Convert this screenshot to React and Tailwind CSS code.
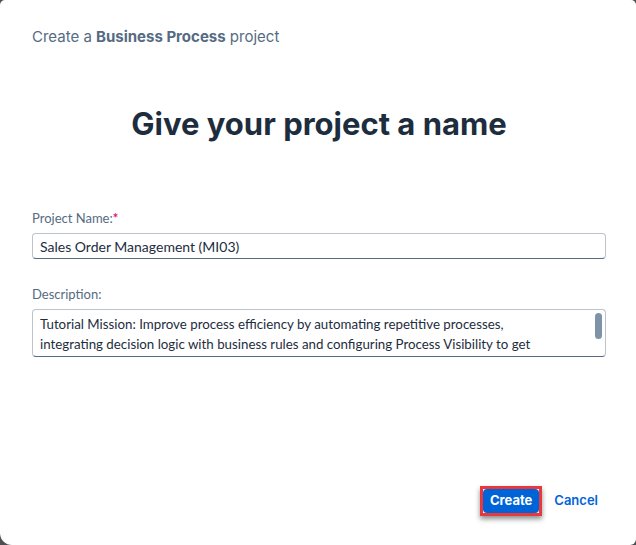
import React from "react";

export default function App() {
  return (
    <div className="w-[636px] h-[545px] bg-[#4d4f52] overflow-hidden" style={{ fontFamily: 'Lato, "Liberation Sans", sans-serif' }}>
      <div className="w-[636px] h-[545px] bg-white rounded-tl-[5px] rounded-tr-[5px] rounded-bl-[12px] rounded-br-[6px] flex flex-col pl-8 pr-[30px]">
        <div className="pt-[27px] text-[15px] text-[#556b82] leading-[20px]" style={{ fontFamily: 'Inter, sans-serif' }}>
          Create a <span className="font-bold">Business Process</span> project
        </div>
        <h1 className="mt-[58px] text-center text-[31px] font-bold text-[#1d2d3e] leading-[38px]" style={{ fontFamily: 'Inter, sans-serif' }}>
          Give your project a name
        </h1>
        <div className="mt-[66px] text-[13px] text-[#556b82] leading-[18px]">
          Project Name:<span className="text-[#df1278] font-bold">*</span>
        </div>
        <div className="mt-[6px] h-[26px] border border-[#bcc3ca] border-b-[#556b82] rounded-[4px] flex items-center px-[7px] text-[14px] text-[#1d2d3e]">
          Sales Order Management (MI03)
        </div>
        <div className="mt-[26px] text-[13px] text-[#556b82] leading-[18px]">Description:</div>
        <div className="mt-[6px] h-[48px] border border-[#bcc3ca] border-b-[#556b82] rounded-[4px] relative overflow-hidden">
          <div className="px-[7px] pt-[4px] pr-[24px] text-[13.3px] leading-[20px] text-[#1d2d3e]">
            Tutorial Mission: Improve process efficiency by automating repetitive processes,
            <br />
            integrating decision logic with business rules and configuring Process Visibility to get
          </div>
          <div className="absolute right-[3px] top-[3px] w-[7px] h-[26px] rounded-full bg-[#7f93a8]"></div>
        </div>
        <div className="flex-1"></div>
        <div className="flex items-center justify-end gap-[12px] pb-[29px] pr-[8px]" style={{ fontFamily: 'Inter, sans-serif' }}>
          <div className="border-[3px] border-[#e8383b] shadow-[0_3px_5px_rgba(0,0,0,0.45)]">
            <div className="bg-[#0064d9] text-white font-bold text-[13px] px-[7px] h-[24px] flex items-center rounded-[4px]">Create</div>
          </div>
          <div className="text-[#0064d9] font-semibold text-[13px]">Cancel</div>
        </div>
      </div>
    </div>
  );
}
